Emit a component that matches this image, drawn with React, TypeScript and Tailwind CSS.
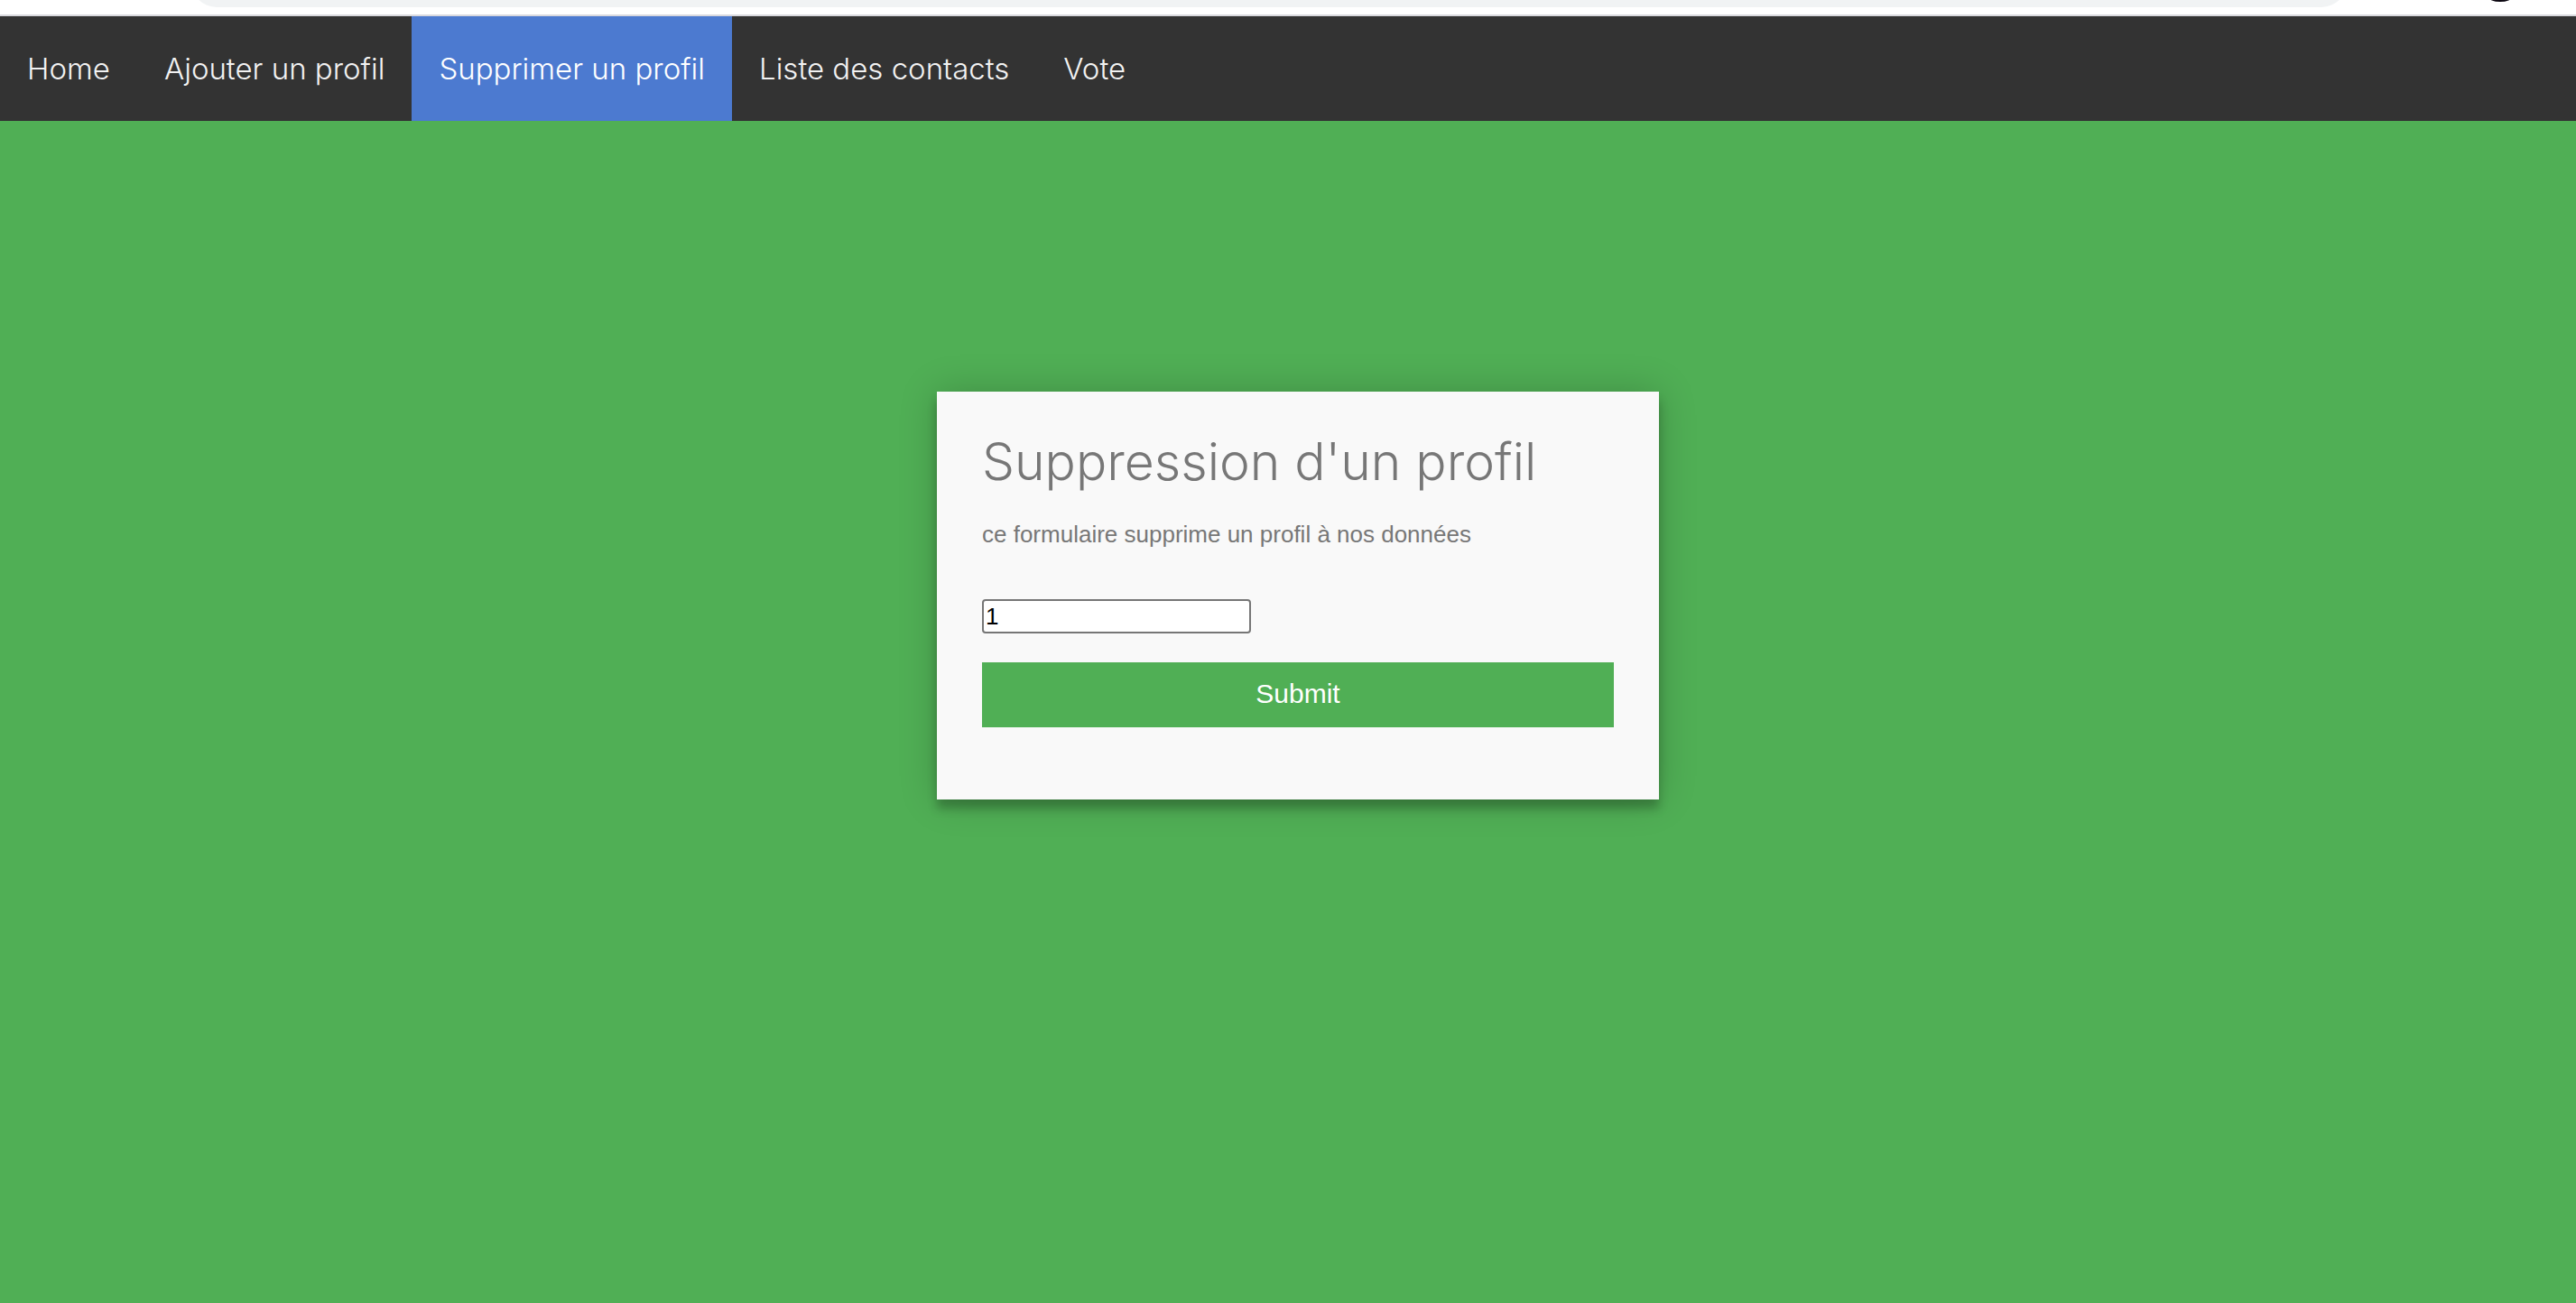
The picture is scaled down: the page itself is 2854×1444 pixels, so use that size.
const links = [
  { label: "Home", active: false },
  { label: "Ajouter un profil", active: false },
  { label: "Supprimer un profil", active: true },
  { label: "Liste des contacts", active: false },
  { label: "Vote", active: false },
];

function BrowserEdge() {
  return (
    <div className="relative flex h-[18px] items-start border-b-2 border-[#d9d9de] bg-white pr-[254px] pl-[212px]">
      <svg className="block h-2 flex-1" aria-hidden="true">
        <rect x="0" y="-48" width="100%" height="56" rx="28" fill="#f1f3f4" />
      </svg>
      <svg className="absolute top-0 right-[74px] h-[2px] w-[20px]" viewBox="0 0 20 2" aria-hidden="true">
        <circle cx="10" cy="-26" r="28" fill="#0b0610" />
      </svg>
    </div>
  );
}

export default function App() {
  return (
    <div className="flex min-h-screen flex-col bg-[#50af55] font-['Liberation_Sans',Arial,sans-serif]">
      <BrowserEdge />
      <nav className="flex flex-wrap bg-[#333333] font-['Inter','Liberation_Sans',sans-serif] text-[33px] leading-[40px] font-light">
        {links.map((l) => (
          <a
            key={l.label}
            href="#"
            aria-current={l.active ? "page" : undefined}
            className={
              l.active
                ? "bg-[#4c7ad0] px-[30px] py-[38px] text-white"
                : "px-[30px] py-[38px] text-[#f2f2f2]"
            }
          >
            {l.label}
          </a>
        ))}
      </nav>
      <main className="flex flex-1 items-start justify-center pt-[300px] pl-[22px]">
        <form
          onSubmit={(e) => e.preventDefault()}
          className="flex w-full max-w-[800px] flex-col items-start bg-[#f9f9f9] px-[50px] pt-12 pb-20 text-[#777777] shadow-[0_0_40px_0_rgba(0,0,0,0.2),0_10px_10px_0_rgba(0,0,0,0.24)]"
        >
          <h1 className="font-['Inter','Liberation_Sans',sans-serif] text-[57px] leading-[60px] font-light">
            Suppression d'un profil
          </h1>
          <label htmlFor="profile" className="mt-8 text-[26px] leading-[36px]">
            ce formulaire supprime un profil à nos données
          </label>
          <input
            id="profile"
            type="text"
            defaultValue="1"
            className="mt-[54px] h-[38px] w-[298px] rounded-[4px] border-2 border-[#767676] bg-white px-[2px] text-[26px] text-black"
          />
          <button type="submit" className="mt-8 h-[72px] w-full bg-[#50af55] pb-1 text-[30px] text-white">
            Submit
          </button>
        </form>
      </main>
    </div>
  );
}
